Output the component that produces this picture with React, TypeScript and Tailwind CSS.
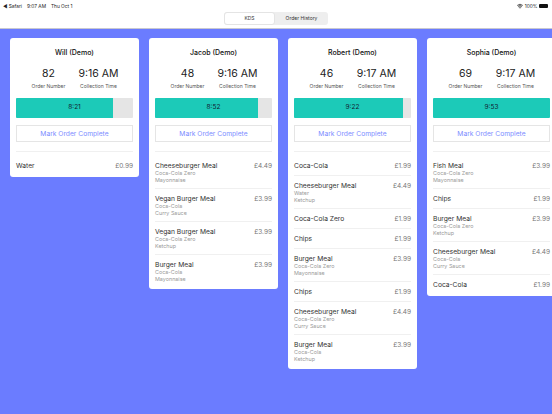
import { Wifi } from "lucide-react";

interface OrderItem {
  name: string;
  price: string;
  extras?: string[];
}

interface Order {
  server: string;
  number: number;
  time: string;
  timer: string;
  progress: number;
  items: OrderItem[];
}

const ORDERS: Order[] = [
  {
    server: "Will (Demo)",
    number: 82,
    time: "9:16 AM",
    timer: "8:21",
    progress: 83,
    items: [{ name: "Water", price: "£0.99" }],
  },
  {
    server: "Jacob (Demo)",
    number: 48,
    time: "9:16 AM",
    timer: "8:52",
    progress: 88,
    items: [
      { name: "Cheeseburger Meal", price: "£4.49", extras: ["Coca-Cola Zero", "Mayonnaise"] },
      { name: "Vegan Burger Meal", price: "£3.99", extras: ["Coca-Cola", "Curry Sauce"] },
      { name: "Vegan Burger Meal", price: "£3.99", extras: ["Coca-Cola Zero", "Ketchup"] },
      { name: "Burger Meal", price: "£3.99", extras: ["Coca-Cola", "Mayonnaise"] },
    ],
  },
  {
    server: "Robert (Demo)",
    number: 46,
    time: "9:17 AM",
    timer: "9:22",
    progress: 93,
    items: [
      { name: "Coca-Cola", price: "£1.99" },
      { name: "Cheeseburger Meal", price: "£4.49", extras: ["Water", "Ketchup"] },
      { name: "Coca-Cola Zero", price: "£1.99" },
      { name: "Chips", price: "£1.99" },
      { name: "Burger Meal", price: "£3.99", extras: ["Coca-Cola Zero", "Mayonnaise"] },
      { name: "Chips", price: "£1.99" },
      { name: "Cheeseburger Meal", price: "£4.49", extras: ["Coca-Cola Zero", "Curry Sauce"] },
      { name: "Burger Meal", price: "£3.99", extras: ["Coca-Cola", "Ketchup"] },
    ],
  },
  {
    server: "Sophia (Demo)",
    number: 69,
    time: "9:17 AM",
    timer: "9:53",
    progress: 100,
    items: [
      { name: "Fish Meal", price: "£3.99", extras: ["Coca-Cola Zero", "Mayonnaise"] },
      { name: "Chips", price: "£1.99" },
      { name: "Burger Meal", price: "£3.99", extras: ["Coca-Cola Zero", "Ketchup"] },
      { name: "Cheeseburger Meal", price: "£4.49", extras: ["Coca-Cola", "Curry Sauce"] },
      { name: "Coca-Cola", price: "£1.99" },
    ],
  },
];

function StatusBar() {
  return (
    <div className="flex h-[9px] items-center justify-between pl-[3px] pr-[4px] pt-[3px] text-[4.8px] leading-none text-[#222]">
      <div className="flex gap-[5px]">
        <span>◀ Safari</span>
        <span>9:07 AM</span>
        <span>Thu Oct 1</span>
      </div>
      <div className="flex items-center gap-[1.5px]">
        <Wifi size={6} strokeWidth={3} />
        <span>100%</span>
        <div className="h-[4px] w-[9px] rounded-[1px] bg-[#111]" />
      </div>
    </div>
  );
}

function OrderCard({ order }: { order: Order }) {
  return (
    <div className="w-[129px] shrink-0 rounded-[3px] bg-white px-[6px] pb-[1.5px]">
      <div className="pt-[10px] text-center text-[7px] font-medium leading-[9px] text-[#111]">
        {order.server}
      </div>
      <div className="mt-[9px] flex justify-center pr-[2px]">
        <div className="w-[50px] text-center">
          <div className="text-[10.5px] leading-[15px] text-[#222]">{order.number}</div>
          <div className="mt-[2px] text-[5px] leading-[7px] text-[#555]">Order Number</div>
        </div>
        <div className="w-[50px] text-center">
          <div className="whitespace-nowrap text-[10.5px] leading-[15px] text-[#222]">{order.time}</div>
          <div className="mt-[2px] whitespace-nowrap text-[5px] leading-[7px] text-[#555]">Collection Time</div>
        </div>
      </div>
      <div className="relative mt-[8px] h-[20px] overflow-hidden rounded-[1px] bg-[#e5e5e5]">
        <div className="h-full bg-[#1ccab8]" style={{ width: `${order.progress}%` }} />
        <div className="absolute inset-0 flex items-center justify-center text-[6.5px] text-[#123]">
          {order.timer}
        </div>
      </div>
      <div className="mt-[7px] flex h-[17px] items-center justify-center border border-[#e5e5e5] pt-[1px] text-[6.7px] text-[#7b8cff]">
        Mark Order Complete
      </div>
      <div className="mt-[9px]">
        {order.items.map((item, i) => (
          <div
            key={i}
            className="border-t border-[#f0f0f0] pb-[5px] pt-[6px] first:pt-[10px]"
          >
            <div className="flex justify-between text-[6.7px] leading-[8px]">
              <span className="text-[#333]">{item.name}</span>
              <span className="text-[6.5px] text-[#777]">{item.price}</span>
            </div>
            {item.extras?.map((extra) => (
              <div key={extra} className="text-[5.4px] leading-[6.5px] text-[#999]">
                {extra}
              </div>
            ))}
          </div>
        ))}
      </div>
    </div>
  );
}

export default function App() {
  return (
    <div className="flex h-[414px] w-[552px] flex-col overflow-hidden bg-[#6b7cff] font-['Inter',sans-serif]">
      <div className="h-[29px] shrink-0 border-b border-[#c8c8d0] bg-white">
        <StatusBar />
        <div className="mt-[3px] flex justify-center">
          <div className="flex h-[13px] w-[104px] rounded-[3px] bg-[#eeeeee] text-[5px] text-[#333]">
            <div className="flex w-[51px] items-center justify-center rounded-[3px] border border-[#e4e4e4] bg-white">
              KDS
            </div>
            <div className="flex flex-1 items-center justify-center">Order History</div>
          </div>
        </div>
      </div>
      <div className="flex items-start gap-[10px] pl-[10px] pt-[9px]">
        {ORDERS.map((order) => (
          <OrderCard key={order.server} order={order} />
        ))}
      </div>
    </div>
  );
}
